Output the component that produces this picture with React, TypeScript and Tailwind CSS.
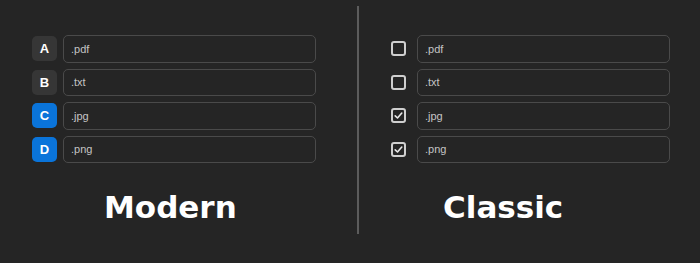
const extensions = ['.pdf', '.txt', '.jpg', '.png'];
const letters = ['A', 'B', 'C', 'D'];
const selected = [false, false, true, true];

function ExtInput({ value }: { value: string }) {
  return (
    <div className="flex h-[27.5px] w-[253px] items-center rounded-[5px] border border-[#4a4a4a] pl-[7px] font-['Liberation_Sans',Arial,sans-serif] text-[11px] text-[#c4c4c4]">
      {value}
    </div>
  );
}

function Badge({ letter, active }: { letter: string; active: boolean }) {
  return (
    <div
      className={`flex h-[25px] w-[25px] items-center justify-center rounded-[5px] font-['Liberation_Sans',Arial,sans-serif] text-[13px] font-bold text-white ${
        active ? 'bg-[#0a74da]' : 'bg-[#363636]'
      }`}
    >
      {letter}
    </div>
  );
}

function CheckBox({ checked }: { checked: boolean }) {
  return (
    <div className="flex h-[15px] w-[15px] items-center justify-center rounded-[3px] border-2 border-[#cfcfcf]">
      {checked && (
        <svg width="9" height="9" viewBox="0 0 9 9" fill="none">
          <path d="M1.2 4.8 L3.5 7 L7.8 2" stroke="#e8e8e8" strokeWidth="1.6" strokeLinecap="round" strokeLinejoin="round" />
        </svg>
      )}
    </div>
  );
}

export default function App() {
  return (
    <div className="flex h-[263px] w-[700px] bg-[#252525]">
      <div className="flex w-[357px] flex-col pl-[32px] pt-[35px]">
        <div className="flex flex-col gap-[6px]">
          {extensions.map((ext, i) => (
            <div key={ext} className="flex items-center gap-[6px]">
              <Badge letter={letters[i]} active={selected[i]} />
              <ExtInput value={ext} />
            </div>
          ))}
        </div>
        <h2 className="mt-[21px] pl-[72px] font-['DejaVu_Sans',sans-serif] text-[31px] font-bold text-white">
          Modern
        </h2>
      </div>
      <div className="mt-[6px] h-[228px] w-[2px] bg-[#5c5c5c]" />
      <div className="flex flex-1 flex-col pl-[32px] pt-[35px]">
        <div className="flex flex-col gap-[6px]">
          {extensions.map((ext, i) => (
            <div key={ext} className="flex items-center gap-[11px]">
              <CheckBox checked={selected[i]} />
              <ExtInput value={ext} />
            </div>
          ))}
        </div>
        <h2 className="mt-[21px] pl-[52px] font-['DejaVu_Sans',sans-serif] text-[31px] font-bold text-white">
          Classic
        </h2>
      </div>
    </div>
  );
}
